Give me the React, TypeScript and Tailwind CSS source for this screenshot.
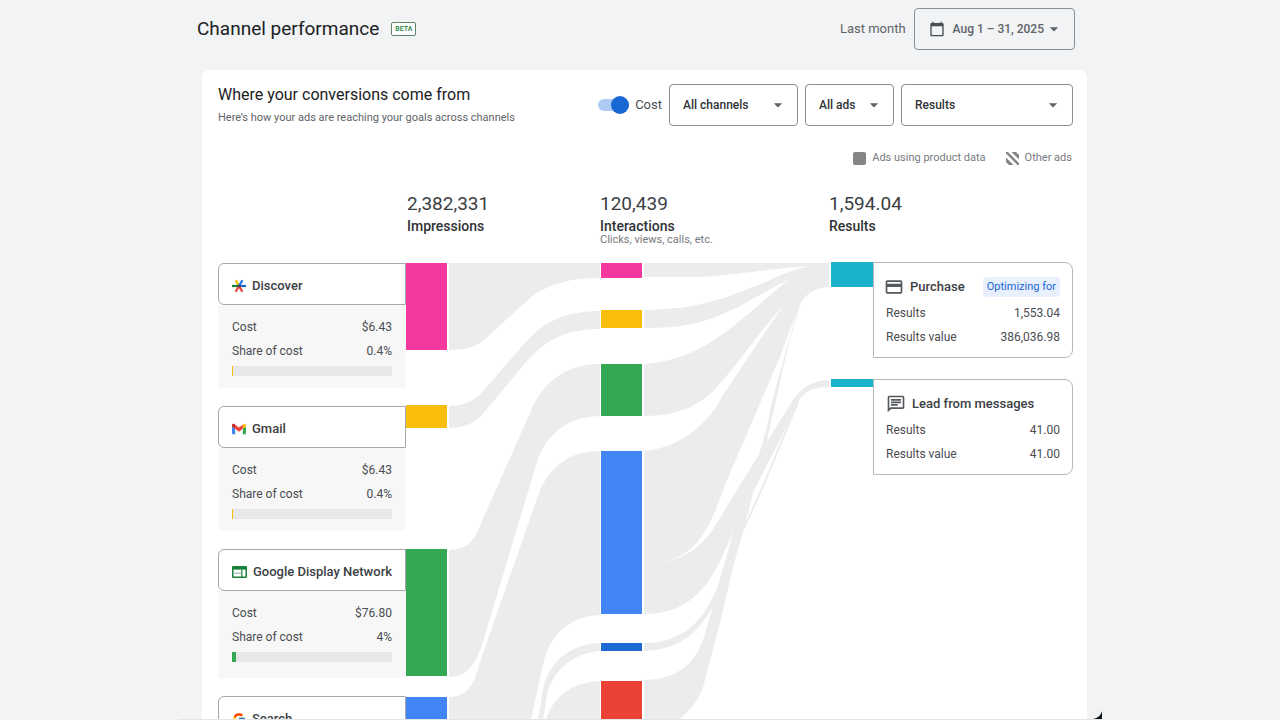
import React, { useState } from 'react';
import { FcGoogle } from 'react-icons/fc';
import { MdArrowDropDown, MdCalendarToday, MdCreditCard, MdOutlineChat } from 'react-icons/md';

interface Channel {
    name: string;
    icon: React.ReactNode;
    cost?: string;
    share?: string;
    percent?: number;
    barClass?: string;
    bodyClass?: string;
}

interface Goal {
    name: string;
    icon: React.ReactNode;
    results: string;
    value: string;
    optimizing?: boolean;
}

const DiscoverIcon = () => (
    <svg viewBox="0 0 14 14" className="w-3.5 h-3.5" fill="none" strokeWidth="2.2">
        <path d="M7 7 L3.8 1.2" stroke="#fbbc04" />
        <path d="M7 7 L10.4 1.2" stroke="#1a73e8" />
        <path d="M0 7 H7" stroke="#188038" />
        <path d="M7 7 H14" stroke="#1967d2" />
        <path d="M7 7 L3.6 12.8" stroke="#ea4335" />
        <path d="M7 7 L10.4 12.8" stroke="#ea4335" />
        <circle cx="7" cy="7" r="1.3" fill="#3c4a63" />
    </svg>
);

const GmailIcon = () => (
    <svg viewBox="52 42 88 66" className="w-3.5 h-3.5">
        <path fill="#4285f4" d="M58 108h14V74L52 59v43c0 3.32 2.69 6 6 6" />
        <path fill="#34a853" d="M120 108h14c3.32 0 6-2.69 6-6V59l-20 15" />
        <path fill="#fbbc04" d="M120 48v26l20-15v-8c0-7.42-8.47-11.65-14.4-7.2" />
        <path fill="#ea4335" d="M72 74V48l24 18 24-18v26L96 92" />
        <path fill="#c5221f" d="M52 51v8l20 15V48l-5.6-4.2c-5.94-4.45-14.4-.22-14.4 7.2" />
    </svg>
);

const DisplayIcon = () => (
    <svg viewBox="0 0 15 12" className="w-[15px] h-3">
        <rect x="0.75" y="0.75" width="13.5" height="10.5" rx="0.6" fill="#fff" stroke="#188038" strokeWidth="1.5" />
        <path d="M0.5 0.5 H14.5 V3.6 H0.5Z" fill="#188038" />
        <path d="M9.8 3.5 V11" stroke="#188038" strokeWidth="1.2" />
        <path d="M1.5 7.2 H9.5" stroke="#7fb391" strokeWidth="1" />
    </svg>
);

const channels: Channel[] = [
    { name: 'Discover', icon: <DiscoverIcon />, cost: '$6.43', share: '0.4%', percent: 0.8, barClass: 'bg-[#f9bd0b]', bodyClass: 'pb-3' },
    { name: 'Gmail', icon: <GmailIcon />, cost: '$6.43', share: '0.4%', percent: 0.8, barClass: 'bg-[#f9bd0b]', bodyClass: 'pb-3' },
    { name: 'Google Display Network', icon: <DisplayIcon />, cost: '$76.80', share: '4%', percent: 2.4, barClass: 'bg-[#34a853]', bodyClass: 'pb-4' },
    { name: 'Search', icon: <FcGoogle className="w-3.5 h-3.5" /> },
];

const goals: Goal[] = [
    { name: 'Purchase', icon: <MdCreditCard className="w-5 h-5 -ml-0.5 text-[#55585c]" />, results: '1,553.04', value: '386,036.98', optimizing: true },
    { name: 'Lead from messages', icon: <MdOutlineChat className="w-5 h-5 text-[#55585c]" />, results: '41.00', value: '41.00' },
];

// Ribbons between the channel, interaction and result nodes
const flows = [
    'M449 263 H600 V278 C572 278 550 283 530 298 L485 339 C475 348 463 350 449 350Z',
    'M449 406 C464 406 476 400 484 390 L524 344 C545 319 570 311 600 311 V329 C570 329 548 337 527 361 L487 409 C476 424 463 428 449 428Z',
    'M449 550 C464 550 473 543 478 530 L530 413 C541 385 563 364 600 364 V416 C563 417 545 438 537 462 L482 645 C474 669 464 677 449 677Z',
    'M449 697 C464 697 474 688 480 662 L540 490 C552 465 570 451 600 451 V615 C570 616 549 635 543 665 L531 720 H449Z',
    'M600 643 C563 645 546 668 542 695 L538 720 H543 L547 695 C552 672 572 653 600 651Z',
    'M600 681 C574 682 554 694 546 720 H600Z',
    'M644 263 H829 V272 L813 266 C770 268 725 277 690 277 H644Z',
    'M644 310 C700 310 735 295 770 280 C785 273 800 267 813 266 L829 268 V272 L813 271 C780 280 755 300 725 313 C700 324 680 328 644 328Z',
    'M644 364 C690 360 715 342 753 310 C780 287 795 271 813 271 L829 270 V278 C806 278 790 298 773 317 C750 345 735 367 717 387 C700 405 680 416 644 416Z',
    'M644 451 C675 448 705 430 723 395 L780 310 C794 288 806 279 829 278 V287 C812 287 803 297 798 308 L780 357 L727 480 C715 512 708 535 687 552 C678 558 668 562 656 563 L644 566Z',
    'M644 563 H658 C682 560 702 548 715 526 L743 480 L793 400 C803 386 814 380 829 380 V387 C814 387 804 391 798 402 L780 440 L754 490 L747 517 L735 528 L723 555 C706 593 684 614 644 614Z',
    'M739 492 L754 467 C761 450 767 430 771 405 L798 308 L801 302 L788 347 L766 445 L752 480Z',
    'M644 643 C683 643 705 620 718 585 L735 528 L742 532 L720 592 C705 628 682 650 644 651Z',
    'M644 680 C680 680 699 660 706 630 L718 590 L735 526 L747 515 L743 532 L733 567 L720 623 L705 680 C701 698 690 711 678 720 H644Z',
];

const nodes = [
    { x: 406, y: 263, h: 87, fill: '#f538a0' },
    { x: 406, y: 405, h: 23, fill: '#f9bd0b' },
    { x: 406, y: 549, h: 127, fill: '#34a853' },
    { x: 406, y: 697, h: 23, fill: '#4285f4' },
    { x: 601, y: 263, h: 15, fill: '#f538a0' },
    { x: 601, y: 310, h: 18, fill: '#f9bd0b' },
    { x: 601, y: 364, h: 52, fill: '#34a853' },
    { x: 601, y: 451, h: 163, fill: '#4285f4' },
    { x: 601, y: 643, h: 8, fill: '#1f69d2' },
    { x: 601, y: 681, h: 39, fill: '#ea4335' },
    { x: 831, y: 262, h: 25, fill: '#1bb3cb' },
    { x: 831, y: 379, h: 8, fill: '#1bb3cb' },
];

const totals = [
    { value: '2,382,331', label: 'Impressions' },
    { value: '120,439', label: 'Interactions', note: 'Clicks, views, calls, etc.' },
    { value: '1,594.04', label: 'Results' },
];

const FlowChart = () => (
    <svg
        viewBox="406 262 467 458"
        preserveAspectRatio="none"
        className="block w-full h-[458px]"
        role="img"
        aria-label="Flow from impressions to interactions to results"
    >
        <g fill="#ebecee">
            {flows.map((d) => (
                <path key={d} d={d} />
            ))}
        </g>
        <path d="M743 530 C765 485 783 437 798 402" fill="none" stroke="#ebecee" strokeWidth="2" />
        {nodes.map((node) => (
            <rect key={`${node.x}-${node.y}`} x={node.x} y={node.y} width={node.x === 831 ? 42 : 41} height={node.h} fill={node.fill} />
        ))}
    </svg>
);

const Filter = ({ label, options, className }: { label: string; options: string[]; className: string }) => (
    <div className={`relative ${className}`}>
        <select
            aria-label={label}
            className="w-full h-[42px] appearance-none rounded border border-[#8c8f92] bg-white pl-[13px] pr-8 text-xs font-medium text-[#303336]"
        >
            {options.map((option) => (
                <option key={option}>{option}</option>
            ))}
        </select>
        <MdArrowDropDown className="pointer-events-none absolute right-2.5 top-[11px] w-5 h-5 text-[#5f6368]" />
    </div>
);

const Row = ({ label, value }: { label: string; value: string }) => (
    <div className="flex justify-between text-xs leading-6">
        <dt>{label}</dt>
        <dd>{value}</dd>
    </div>
);

const ChannelCard = ({ channel }: { channel: Channel }) => (
    <section>
        <h3 className="flex items-center gap-1.5 h-[42px] pl-[13px] pt-1 rounded-l-md border border-[#a5a8ab] bg-white text-[13px] font-medium whitespace-nowrap text-[#3c4043]">
            {channel.icon}
            {channel.name}
        </h3>
        {channel.cost && channel.share && (
            <div className={`rounded-b bg-[#f7f7f7] px-3.5 pt-2.5 ${channel.bodyClass}`}>
                <dl className="text-[#4a4d51]">
                    <Row label="Cost" value={channel.cost} />
                    <Row label="Share of cost" value={channel.share} />
                </dl>
                <div className="mt-[3px] h-2.5 bg-[#e6e7e9]">
                    <div className={`h-full ${channel.barClass}`} style={{ width: `${channel.percent}%` }} />
                </div>
            </div>
        )}
    </section>
);

const GoalCard = ({ goal }: { goal: Goal }) => (
    <section className="h-24 rounded-r-lg border border-[#b6b8ba] bg-white px-3 pt-3">
        <div className="flex items-center justify-between h-6 mb-0.5">
            <h3 className="flex items-center gap-1.5 text-[13px] font-medium text-[#3c4043]">
                {goal.icon}
                {goal.name}
            </h3>
            {goal.optimizing && (
                <span className="rounded-sm bg-[#e8f0fe] px-1 text-[11px] leading-5 text-[#1967d2]">Optimizing for</span>
            )}
        </div>
        <dl className="text-[#4a4d51]">
            <Row label="Results" value={goal.results} />
            <Row label="Results value" value={goal.value} />
        </dl>
    </section>
);

export default function App() {
    const [showCost, setShowCost] = useState(true);

    return (
        <div className="h-screen overflow-hidden bg-[#f2f3f5] font-[Roboto,sans-serif]">
            <main className="relative mx-auto h-full max-w-[924px] overflow-hidden border-b border-[#e3e4e6] bg-[#f1f3f4] pl-[19px] pr-[15px]">
                <header className="flex items-center justify-between h-[50px] mb-5 pt-2 pr-3">
                    <h1 className="flex items-center gap-3 text-[19px] text-[#202124]">
                        Channel performance
                        <span className="rounded-xs border border-[#5b8468] bg-white px-[3px] text-[7px] font-medium leading-3 text-[#188038]">BETA</span>
                    </h1>
                    <div className="flex items-center gap-2 text-[13px] text-[#5f6368]">
                        Last month
                        <button className="flex items-center h-[42px] pl-3.5 pr-2.5 rounded border border-[#8c8f92] text-xs font-medium text-[#5f6368]">
                            <MdCalendarToday className="w-4 h-4 mr-2 text-[#4a4d51]" />
                            Aug 1 – 31, 2025
                            <MdArrowDropDown className="w-5 h-5" />
                        </button>
                    </div>
                </header>

                <div className="ml-[5px] rounded-lg bg-white pl-4 pr-3.5 pt-3.5">
                    <div className="flex justify-between">
                        <div className="pt-px">
                            <h2 className="text-base leading-5 text-[#202124]">Where your conversions come from</h2>
                            <p className="mt-[5px] text-[11px] leading-4 text-[#5f6368]">Here’s how your ads are reaching your goals across channels</p>
                        </div>
                        <div className="flex items-center gap-[7px]">
                            <label className="flex items-center gap-1.5 text-[13px] text-[#4a4d51]">
                                <input
                                    type="checkbox"
                                    role="switch"
                                    checked={showCost}
                                    onChange={(e) => setShowCost(e.target.checked)}
                                    className="relative appearance-none w-[31px] h-3 rounded-full bg-[#aecbf5] before:absolute before:-top-[3px] before:left-0 before:size-[18px] before:rounded-full before:bg-[#80868b] checked:before:left-[13px] checked:before:bg-[#1967d2]"
                                />
                                Cost
                            </label>
                            <Filter label="Channels" options={['All channels', 'Search', 'Gmail']} className="w-[129px]" />
                            <Filter label="Ads" options={['All ads', 'Other ads']} className="w-[89px]" />
                            <Filter label="Metric" options={['Results', 'Results value']} className="w-[172px]" />
                        </div>
                    </div>

                    <ul className="flex justify-end gap-5 mt-6 pr-px text-[11px] leading-4 text-[#777a7e]">
                        <li className="flex items-center gap-1.5">
                            <span className="w-[13px] h-[13px] rounded-xs bg-[#858585]" />
                            Ads using product data
                        </li>
                        <li className="flex items-center gap-1.5">
                            <svg viewBox="0 0 13 13" className="w-[13px] h-[13px]" fill="#858585">
                                <path d="M0 0 H2 L13 11 V13 H11.5 L0 1.5Z M5.5 0 H10 L13 3 V7.5Z M0 5.5 L7.5 13 H3 L0 10Z" />
                            </svg>
                            Other ads
                        </li>
                    </ul>

                    <div className="grid grid-cols-[189px_193fr_229fr_244px] h-[70px] mt-[26px]">
                        {totals.map((total) => (
                            <div key={total.label} className="first:col-start-2">
                                <p className="text-[19px] leading-6 text-[#3c4043]">{total.value}</p>
                                <p className="text-sm leading-5 font-medium text-[#303336]">{total.label}</p>
                                {total.note && <p className="text-[11px] leading-2 text-[#777a7e]">{total.note}</p>}
                            </div>
                        ))}
                    </div>

                    <div className="flex items-start">
                        <div className="flex flex-col gap-[18px] w-[188px] shrink-0 pt-px">
                            {channels.map((channel) => (
                                <ChannelCard key={channel.name} channel={channel} />
                            ))}
                        </div>
                        <div className="flex-1 min-w-0">
                            <FlowChart />
                        </div>
                        <div className="flex flex-col gap-[21px] w-[200px] shrink-0">
                            {goals.map((goal) => (
                                <GoalCard key={goal.name} goal={goal} />
                            ))}
                        </div>
                    </div>
                </div>

                <svg viewBox="0 0 9 8" className="absolute bottom-0 right-0 w-[9px] h-2" fill="#111417">
                    <path d="M9 0 V8 H0 C5 7 8 4 9 0Z" />
                </svg>
            </main>
        </div>
    );
}
